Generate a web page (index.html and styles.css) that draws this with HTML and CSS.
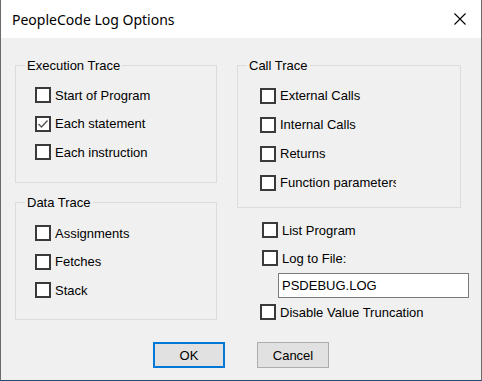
FILE: index.html
```html
<!DOCTYPE html>
<html lang="en">
  <head>
    <meta charset="UTF-8" />
    <title>PeopleCode Log Options</title>
    <link rel="stylesheet" href="styles.css">
  </head>
  <body>
    <div class="dialog">
      <div class="titlebar">
        <span class="title">PeopleCode Log Options</span>
        <svg class="close" width="12" height="12" viewBox="0 0 12 12">
          <path d="M0.5 0.5 L11.5 11.5 M11.5 0.5 L0.5 11.5" stroke="#000" stroke-width="1.1" fill="none" />
        </svg>
      </div>

      <div class="content">
        <div class="column">
          <fieldset class="group group-exec">
            <legend>Execution Trace</legend>
            <label class="option"><span class="box"></span>Start of Program</label>
            <label class="option">
              <span class="box">
                <svg width="12" height="12" viewBox="0 0 12 12">
                  <path d="M1.5 6 L4.5 9 L10.5 2.5" stroke="#555" stroke-width="1.4" fill="none" />
                </svg>
              </span>Each statement
            </label>
            <label class="option"><span class="box"></span>Each instruction</label>
          </fieldset>

          <fieldset class="group group-data">
            <legend>Data Trace</legend>
            <label class="option"><span class="box"></span>Assignments</label>
            <label class="option"><span class="box"></span>Fetches</label>
            <label class="option"><span class="box"></span>Stack</label>
          </fieldset>
        </div>

        <div class="column">
          <fieldset class="group group-call">
            <legend>Call Trace</legend>
            <label class="option"><span class="box"></span><span class="clip">External Calls</span></label>
            <label class="option"><span class="box"></span><span class="clip">Internal Calls</span></label>
            <label class="option"><span class="box"></span><span class="clip">Returns</span></label>
            <label class="option"><span class="box"></span><span class="clip">Function parameters</span></label>
          </fieldset>

          <div class="extra">
            <label class="option option-list"><span class="box"></span>List Program</label>
            <label class="option option-list"><span class="box"></span>Log to File:</label>
            <input class="file-input" type="text" value="PSDEBUG.LOG" />
            <label class="option option-disable"><span class="box"></span>Disable Value Truncation</label>
          </div>
        </div>
      </div>

      <div class="buttons">
        <button class="btn btn-default">OK</button>
        <button class="btn">Cancel</button>
      </div>
    </div>
  </body>
</html>
```

FILE: styles.css
```css
body {
  margin: 0;
  font-family: "Liberation Sans", Arial, sans-serif;
  font-size: 13px;
  color: #000;
}
.dialog {
  width: 482px;
  height: 381px;
  box-sizing: border-box;
  background: #f0f0f0;
  border: 1px solid #6a6a6a;
  border-top: none;
  border-bottom-color: #24496b;
}
.titlebar {
  height: 38px;
  background: #fff;
  display: flex;
  align-items: center;
  justify-content: space-between;
  padding: 0 15px 0 11px;
}
.title {
  font-family: "Noto Sans", sans-serif;
  font-size: 14px;
}
.close {
  display: block;
}
.content {
  display: grid;
  grid-template-columns: 202px 224px;
  column-gap: 20px;
  padding-left: 14px;
}
.group {
  margin: 20px 0 0;
  padding: 8px 9px 15.5px;
  border: 1px solid #dcdcdc;
  min-width: 0;
}
.group legend {
  padding: 0 2px;
  line-height: 15px;
}
.group-data {
  margin-top: 12px;
  padding-top: 9px;
  padding-bottom: 14px;
}
.group-call {
  padding-bottom: 10px;
}
.option {
  display: flex;
  align-items: center;
  height: 28.5px;
  margin-left: 10px;
  white-space: nowrap;
}
.group-call .option {
  height: 29px;
  margin-left: 13px;
}
.box {
  width: 16px;
  height: 16px;
  box-sizing: border-box;
  border: 2px solid #3a3a3a;
  background: #fff;
  margin-right: 4px;
  flex: none;
  display: flex;
  align-items: center;
  justify-content: center;
}
.clip {
  width: 116px;
  overflow: hidden;
}
.extra {
  padding-top: 8px;
}
.extra .option {
  height: 28px;
}
.option-list {
  margin-left: 25px;
}
.extra .option-disable {
  margin-left: 23px;
}
.file-input {
  display: block;
  width: 191px;
  height: 25px;
  box-sizing: border-box;
  margin: 1px 0 0 41px;
  padding: 0 3px;
  border: 1px solid #7a7a7a;
  background: #fff;
  font-family: "Liberation Sans", Arial, sans-serif;
  font-size: 13px;
  color: #000;
  outline: none;
}
.buttons {
  display: flex;
  justify-content: center;
  gap: 32px;
  margin-top: 16px;
}
.btn {
  width: 72px;
  height: 26px;
  box-sizing: border-box;
  background: #e1e1e1;
  border: 1px solid #adadad;
  font-family: "Liberation Sans", Arial, sans-serif;
  font-size: 13px;
  color: #000;
  padding: 0;
}
.btn-default {
  border: 2px solid #0078d7;
}
```
